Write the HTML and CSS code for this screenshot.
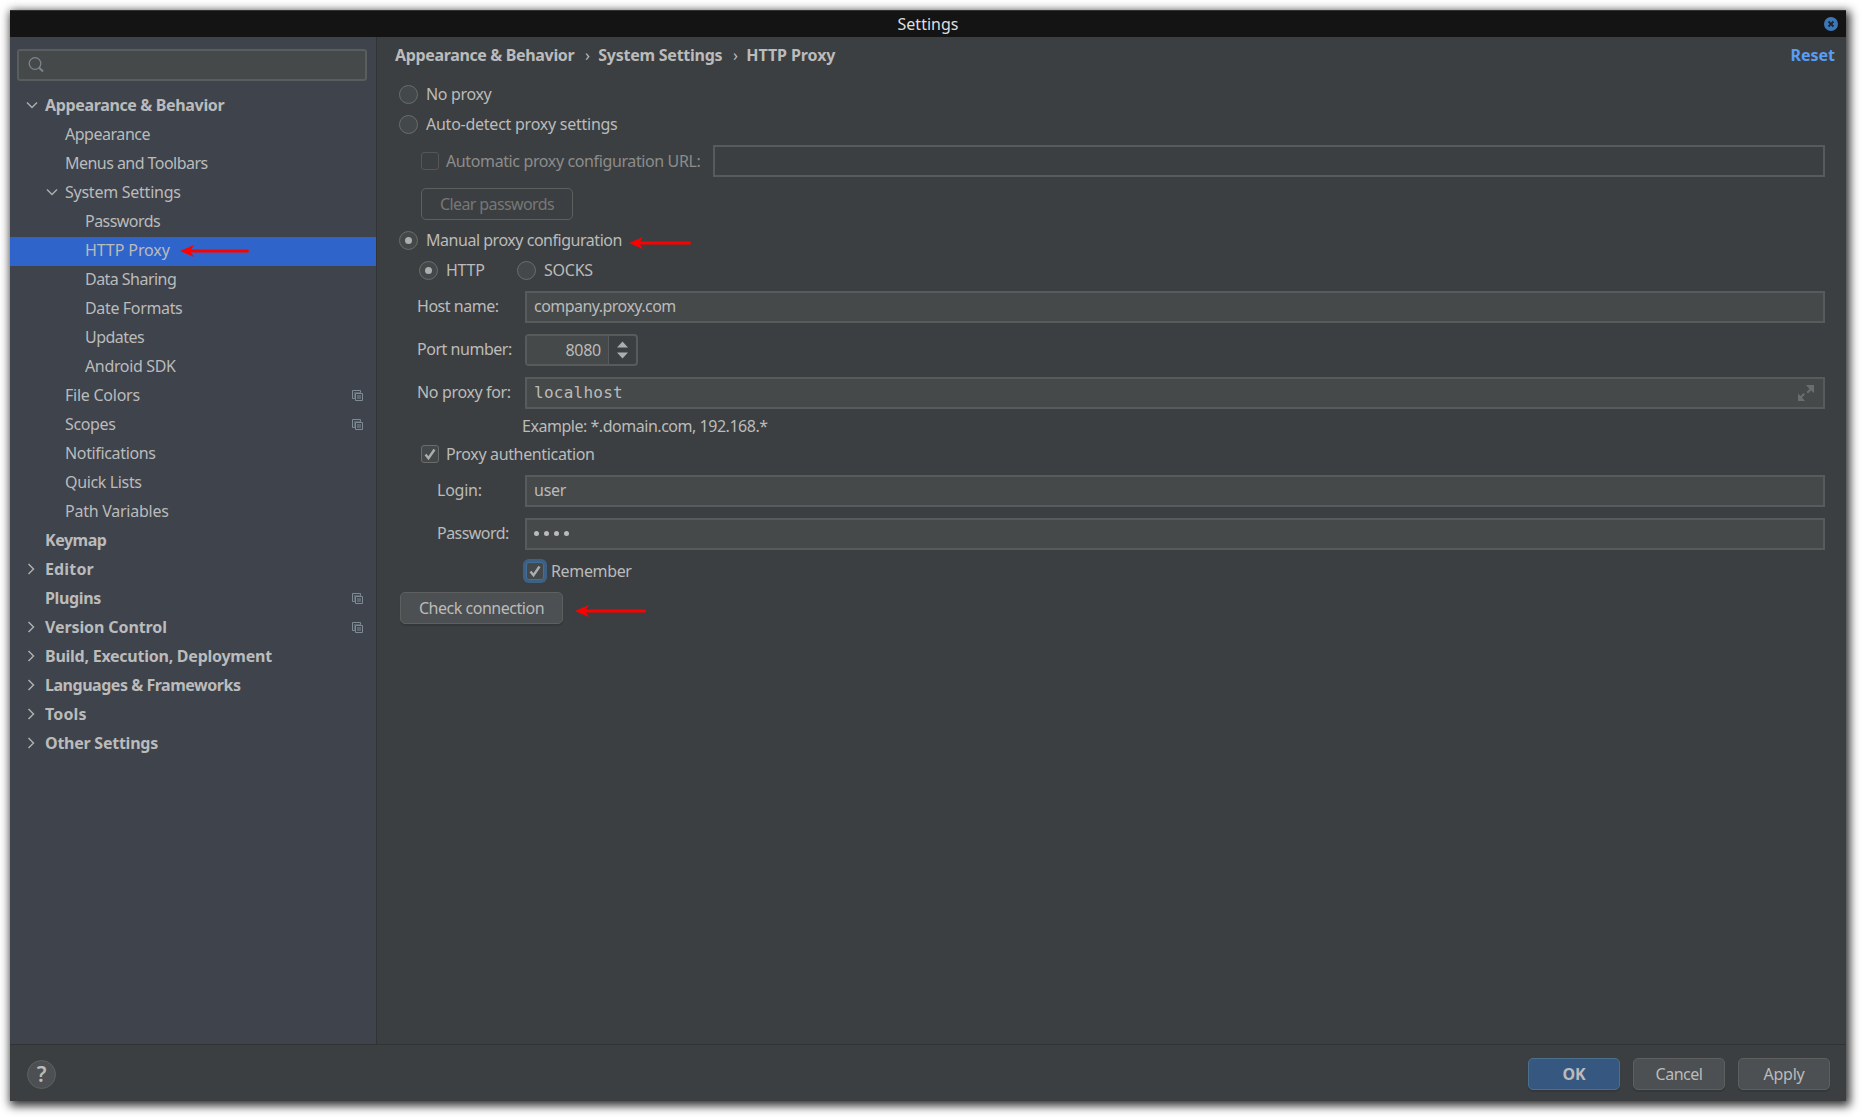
FILE: index.html
```html
<!doctype html>
<html lang="en">
  <head>
    <meta charset="UTF-8" />
    <title>Settings</title>
    <link rel="stylesheet" href="styles.css">
  </head>
  <body>
    <svg width="0" height="0" class="defs">
      <symbol id="down" viewBox="0 0 12 8"><path d="M1 1.5l5 5 5-5" /></symbol>
      <symbol id="right" viewBox="0 0 8 12"><path d="M1.5 1l5 5-5 5" /></symbol>
      <symbol id="copy" viewBox="0 0 11 11">
        <path d="M2.5 8.5h-2v-8h8v2M3.5 3.5h7v7h-7zM5 6h4M5 8h4" />
        <path d="M2.5 9V2.5H9" opacity=".5" />
      </symbol>
      <symbol id="check" viewBox="0 0 18 18"><path d="M4.5 9.5l3 3.7 6-8.7" /></symbol>
    </svg>
    <div class="window">
      <div class="titlebar">
        <span class="title">Settings</span>
        <svg class="close" viewBox="0 0 14 14"><circle cx="7" cy="7" r="7" /><path d="M4.5 4.5l5 5M9.5 4.5l-5 5" /></svg>
      </div>
      <div class="content">
        <div class="sidebar">
          <div class="search">
            <svg viewBox="0 0 16 16"><circle cx="7" cy="6.5" r="5.8" /><path d="M11 10.5l4 4" stroke-width="2" /></svg>
          </div>
          <div class="tree">
            <div class="item top"><svg class="down"><use href="#down" /></svg><span class="tight-1">Appearance &amp; Behavior</span></div>
            <div class="item sub"><span class="tight-2">Appearance</span></div>
            <div class="item sub"><span class="tight-3">Menus and Toolbars</span></div>
            <div class="item sub"><svg class="down"><use href="#down" /></svg><span>System Settings</span></div>
            <div class="item leaf"><span class="tight-3">Passwords</span></div>
            <div class="item leaf selected">
              <span class="wide-1">HTTP Proxy</span>
              <svg class="arrow" width="69" height="12" viewBox="0 0 69 12"><path d="M10 6h57.500" /><path class="head" d="M0 6L14 0 10 6 14 12z" /></svg>
            </div>
            <div class="item leaf"><span class="tight-3">Data Sharing</span></div>
            <div class="item leaf"><span class="tight-1">Date Formats</span></div>
            <div class="item leaf"><span class="tight-3">Updates</span></div>
            <div class="item leaf"><span class="tight-1">Android SDK</span></div>
            <div class="item sub"><span>File Colors</span><svg class="copy"><use href="#copy" /></svg></div>
            <div class="item sub"><span class="tight-1">Scopes</span><svg class="copy"><use href="#copy" /></svg></div>
            <div class="item sub"><span class="tight-1">Notifications</span></div>
            <div class="item sub"><span class="tight-1">Quick Lists</span></div>
            <div class="item sub"><span>Path Variables</span></div>
            <div class="item top"><span class="tight-2">Keymap</span></div>
            <div class="item top"><svg class="right"><use href="#right" /></svg><span class="wide-2">Editor</span></div>
            <div class="item top"><span class="tight-1">Plugins</span><svg class="copy"><use href="#copy" /></svg></div>
            <div class="item top"><svg class="right"><use href="#right" /></svg><span class="wide-1">Version Control</span><svg class="copy"><use href="#copy" /></svg></div>
            <div class="item top"><svg class="right"><use href="#right" /></svg><span>Build, Execution, Deployment</span></div>
            <div class="item top"><svg class="right"><use href="#right" /></svg><span class="tight-2">Languages &amp; Frameworks</span></div>
            <div class="item top"><svg class="right"><use href="#right" /></svg><span class="wide-2">Tools</span></div>
            <div class="item top"><svg class="right"><use href="#right" /></svg><span>Other Settings</span></div>
          </div>
        </div>
        <div class="main">
          <div class="breadcrumb">
            <span class="tight-1">Appearance &amp; Behavior</span>
            <span class="sep">›</span>
            <span>System Settings</span>
            <span class="sep">›</span>
            <span class="wide-1">HTTP Proxy</span>
            <span class="reset">Reset</span>
          </div>
          <div class="form">
            <div class="row"><i class="radio"></i><span class="tight-1">No proxy</span></div>
            <div class="row"><i class="radio"></i><span>Auto-detect proxy settings</span></div>
            <div class="row field url">
              <i class="checkbox off"></i><span class="muted">Automatic proxy configuration URL:</span>
              <div class="input disabled"></div>
            </div>
            <div class="row field clear"><div class="button disabled">Clear passwords</div></div>
            <div class="row manual">
              <i class="radio on"></i><span class="tight-2">Manual proxy configuration</span>
              <svg class="arrow" width="62" height="12" viewBox="0 0 62 12"><path d="M10 6h50.500" /><path class="head" d="M0 6L14 0 10 6 14 12z" /></svg>
            </div>
            <div class="row type">
              <i class="radio on"></i><span class="http">HTTP</span>
              <i class="radio"></i><span>SOCKS</span>
            </div>
            <div class="row field"><label class="tight-2">Host name:</label><div class="input tight-3">company.proxy.com</div></div>
            <div class="row field">
              <label class="tight-2">Port number:</label>
              <div class="spinner">
                <span class="port">8080</span>
                <svg width="11" height="18" viewBox="0 0 11 18"><path d="M0 6.500L5.500 0.500 11 6.500zM0 11.500L5.500 17.500 11 11.500z" /></svg>
              </div>
            </div>
            <div class="row field">
              <label class="tight-1">No proxy for:</label>
              <div class="input mono">localhost<svg class="expand" viewBox="0 0 16 16"><path d="M8 0h8v8l-3-2.500-3 3-1.500-1.500 3-3zM0 16V8.500l2.500 2.500 3-3 1.500 1.500-3 3L7 16z" /></svg></div>
            </div>
            <div class="example tight-2">Example: *.domain.com, 192.168.*</div>
            <div class="row auth"><i class="checkbox"><svg><use href="#check" /></svg></i><span class="tight-1">Proxy authentication</span></div>
            <div class="row field"><label class="inner">Login:</label><div class="input">user</div></div>
            <div class="row field"><label class="inner tight-3">Password:</label><div class="input"><span class="dots"><b></b><b></b><b></b><b></b></span></div></div>
            <div class="row remember"><i class="checkbox focus"><svg><use href="#check" /></svg></i><span class="tight-1">Remember</span></div>
            <div class="row field check">
              <div class="button tight-2">Check connection</div>
              <svg class="arrow" width="71" height="12" viewBox="0 0 71 12"><path d="M10 6h59.500" /><path class="head" d="M0 6L14 0 10 6 14 12z" /></svg>
            </div>
          </div>
        </div>
      </div>
      <div class="footer">
        <div class="help">?</div>
        <div class="button ok">OK</div>
        <div class="button tight-2">Cancel</div>
        <div class="button">Apply</div>
      </div>
    </div>
  </body>
</html>
```
FILE: styles.css
```css
* {
  box-sizing: border-box;
}
body {
  margin: 0;
  padding: 10px 16px 16px 10px;
  height: 1117px;
  background: #fff;
  color: #bbb;
  font: 16px/20px "Noto Sans", sans-serif;
  letter-spacing: -0.25px;
  white-space: nowrap;
  overflow: hidden;
}
svg {
  flex: none;
  fill: none;
}
.defs {
  position: absolute;
}
/* letter-spacing steps */
.tight-1 {
  letter-spacing: -0.35px;
}
.tight-2 {
  letter-spacing: -0.47px;
}
.tight-3 {
  letter-spacing: -0.54px;
}
.wide-1 {
  letter-spacing: -0.1px;
}
.wide-2 {
  letter-spacing: 0.15px;
}
.window {
  display: flex;
  flex-direction: column;
  height: 1091px;
  background: #3c3f41;
  box-shadow: 2px 3px 9px 2px rgba(0, 0, 0, 0.8);
}
.titlebar {
  display: flex;
  align-items: center;
  height: 27px;
  padding: 0 8px 0 22px;
  background: #141414;
  border-top: 1px solid #303334;
}
.title {
  flex: 1;
  color: #dfdfdf;
  text-align: center;
  letter-spacing: 0;
}
.close {
  width: 14px;
  height: 14px;
  fill: #3c78b8;
}
.close path {
  stroke: #1b2733;
  stroke-width: 1.8;
}
.content {
  display: flex;
  flex: 1;
}
.sidebar {
  width: 367px;
  padding-top: 12px;
  background: #3e434c;
  border-right: 1px solid #323334;
}
.search {
  display: flex;
  align-items: center;
  width: 350px;
  height: 32px;
  margin-left: 7px;
  padding-left: 9px;
  background: #45494a;
  border: 2px solid #585d5e;
  border-radius: 3px;
}
.search svg {
  width: 16px;
  height: 16px;
  stroke: #7b858c;
  stroke-width: 1.3;
}
.tree {
  margin-top: 11px;
}
.item {
  display: flex;
  align-items: center;
  height: 29px;
  padding: 0 13px 3px 0;
}
.item.top {
  padding-left: 35px;
  font-weight: bold;
}
.item.sub {
  padding-left: 55px;
}
.item.leaf {
  padding-left: 75px;
}
.selected {
  background: #2f65ca;
}
.selected .arrow {
  margin: 2px 0 0 10px;
}
.down {
  width: 12px;
  height: 8px;
  margin: 0 7px 0 -19px;
  stroke: #adadad;
  stroke-width: 1.5;
}
.right {
  width: 8px;
  height: 12px;
  margin: 0 10px 0 -18px;
  stroke: #adadad;
  stroke-width: 1.5;
}
.copy {
  width: 11px;
  height: 11px;
  margin-left: auto;
  stroke: #7f8b93;
}
.arrow {
  stroke: #f00;
  stroke-width: 3;
  stroke-linecap: round;
}
.arrow .head {
  fill: #f00;
  stroke: none;
}
.main {
  flex: 1;
}
.breadcrumb {
  display: flex;
  align-items: center;
  height: 36px;
  padding: 0 11px 0 18px;
  font-weight: bold;
}
.sep {
  width: 24px;
  padding-left: 2px;
  font-weight: normal;
  text-align: center;
}
.reset {
  margin-left: auto;
  color: #589df6;
  letter-spacing: 0;
}
.form {
  padding: 6px 21px 0 22px;
}
.row {
  display: flex;
  align-items: center;
  height: 30px;
}
.field {
  height: 32px;
  margin-bottom: 11px;
}
.radio {
  width: 19px;
  height: 19px;
  margin-right: 8px;
  background: #43494a;
  border: 1.5px solid #6b6b6b;
  border-radius: 50%;
}
.on {
  display: flex;
  align-items: center;
  justify-content: center;
}
.on::after {
  content: "";
  width: 7px;
  height: 7px;
  background: #adadad;
  border-radius: 50%;
}
.checkbox {
  width: 18px;
  height: 18px;
  margin-right: 7px;
  background: #43494a;
  border: 1px solid #6b6b6b;
  border-radius: 3px;
}
.checkbox svg {
  display: block;
  width: 18px;
  height: 18px;
  margin: -1px;
  stroke: #adadad;
  stroke-width: 2.4;
}
.off {
  background: none;
  border-color: #545657;
}
.focus {
  border-color: #466d94;
  box-shadow: 0 0 0 3px #3d6185;
}
.muted {
  color: #8c8c8c;
  letter-spacing: -0.38px;
}
.url {
  margin-top: 6px;
  padding-left: 22px;
}
.input {
  display: flex;
  align-items: center;
  flex: 1;
  height: 32px;
  padding: 0 9px 2px 7px;
  background: #45494a;
  border: 2px solid #585b5c;
}
.input.disabled {
  margin-left: auto;
  flex: none;
  width: 1112px;
  background: none;
}
.mono {
  padding-bottom: 0;
  font-family: "DejaVu Sans Mono", monospace;
  letter-spacing: 0.25px;
}
.expand {
  width: 16px;
  height: 16px;
  margin-left: auto;
  fill: #686e70;
}
.clear {
  margin-bottom: 5px;
  padding-left: 22px;
}
.button {
  display: flex;
  align-items: center;
  justify-content: center;
  height: 32px;
  padding-bottom: 1px;
  background: #4c5052;
  border: 1.5px solid #5e6060;
  border-radius: 5px;
  box-shadow: 0 2px 1px rgba(0, 0, 0, 0.12);
}
.button.disabled {
  width: 152px;
  background: none;
  color: #777;
  box-shadow: none;
  letter-spacing: -0.62px;
}
.manual .arrow {
  margin: 6px 0 0 auto;
}
.manual {
  width: 292px;
}
.type {
  margin-bottom: 6px;
  padding-left: 20px;
}
.http {
  width: 71px;
}
label {
  width: 126px;
  padding: 0 0 2px 18px;
}
.inner {
  padding-left: 38px;
}
.spinner {
  display: flex;
  align-items: center;
  width: 113px;
  height: 32px;
  padding-right: 8px;
  border: 2px solid #585b5c;
  border-radius: 4px;
}
.spinner svg {
  margin-left: auto;
  fill: #adadad;
}
.port {
  width: 82px;
  height: 28px;
  padding: 4px 7px;
  background: #45494a;
  border-right: 1px solid #585b5c;
  text-align: right;
}
.example {
  margin: -4px 0 8px 123px;
}
.auth {
  height: 20px;
  margin-bottom: 11px;
  padding-left: 22px;
}
.dots {
  display: flex;
  gap: 5px;
}
.dots b {
  width: 5px;
  height: 5px;
  background: #bbb;
  border-radius: 50%;
}
.remember {
  height: 20px;
  margin-bottom: 11px;
  padding-left: 127px;
}
.check .button {
  width: 163px;
  margin-left: 1px;
}
.check .arrow {
  margin: 5px 0 0 12px;
}
.footer {
  display: flex;
  align-items: center;
  gap: 13px;
  height: 57px;
  padding: 2px 16px 0 17px;
  border-top: 1px solid #323334;
}
.footer .button {
  width: 92px;
}
.footer .ok {
  background: #365880;
  border-color: #4c708c;
  font-weight: bold;
}
.help {
  width: 29px;
  height: 29px;
  margin-right: auto;
  background: #4c5052;
  border: 1px solid #5e6060;
  border-radius: 50%;
  font-size: 21px;
  font-weight: 600;
  line-height: 27px;
  text-align: center;
}
```
